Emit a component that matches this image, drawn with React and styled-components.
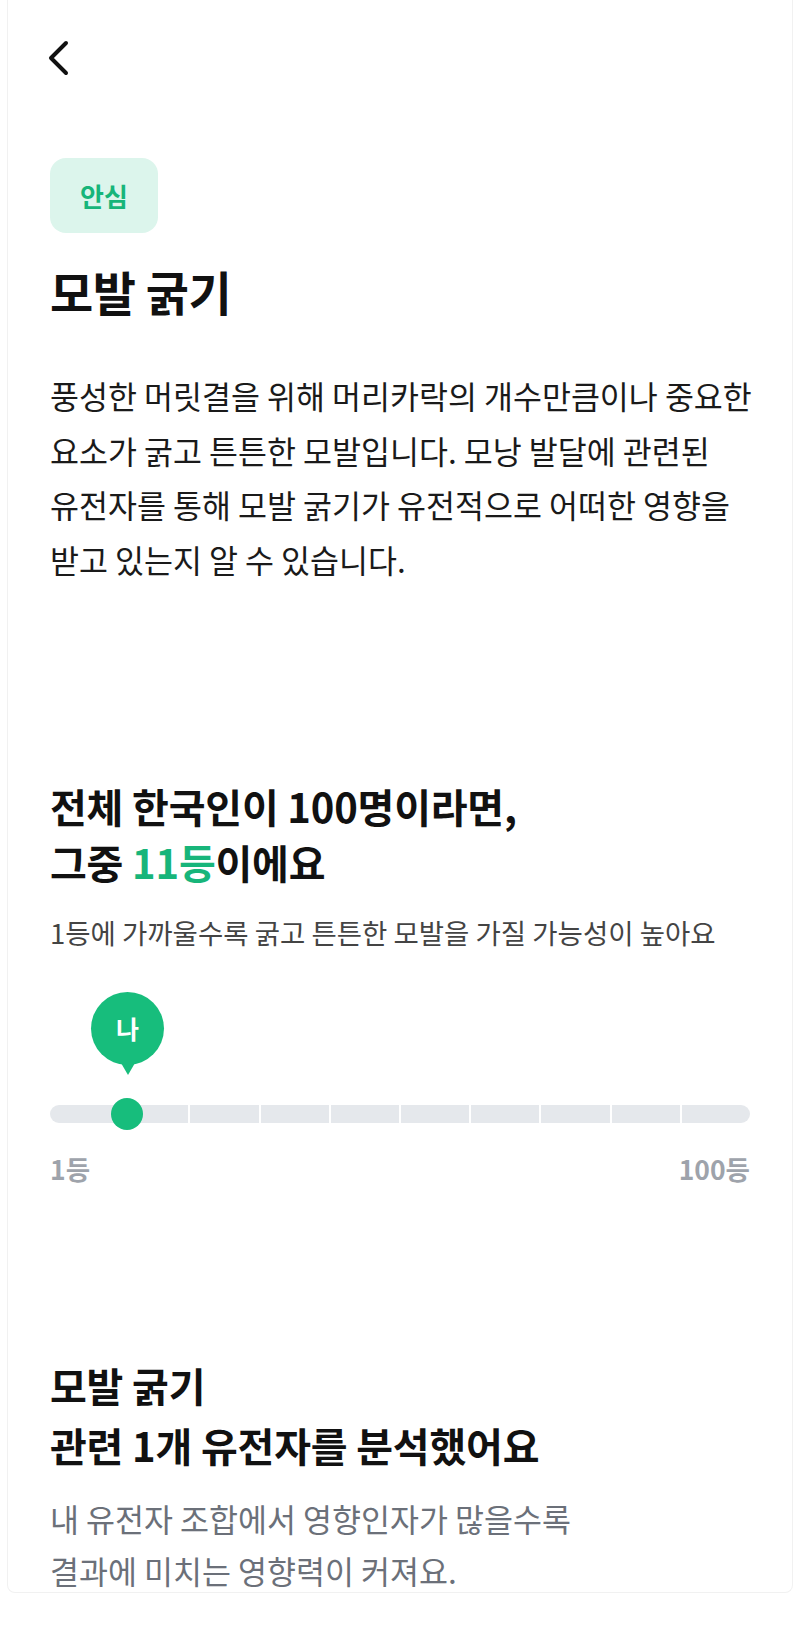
import { createGlobalStyle, styled } from "styled-components";

const GlobalStyle = createGlobalStyle`
  * { box-sizing: border-box; }
  body {
    margin: 0;
    background: #ffffff;
    font-family: "Noto Sans CJK KR", "Noto Sans", sans-serif;
    color: #111111;
  }
`;

const Card = styled.div`
  margin: 0 7px;
  height: 1593px;
  padding: 0 42px;
  border: 1px solid #f1f1f1;
  border-top: none;
  border-radius: 0 0 8px 8px;
`;

const Header = styled.div`
  padding-top: 40px;
  height: 76px;
`;

const BackButton = styled.button`
  border: none;
  background: none;
  padding: 0;
  margin-left: -5px;
  cursor: pointer;
  display: block;
`;

const Badge = styled.div`
  margin-top: 82px;
  width: 108px;
  height: 75px;
  border-radius: 16px;
  background: #dcf5ec;
  color: #17b57a;
  font-size: 26px;
  font-weight: 700;
  display: flex;
  align-items: center;
  justify-content: center;
`;

const Title = styled.h1`
  margin: 28px 0 0;
  font-size: 47px;
  line-height: 60px;
  font-weight: 700;
  letter-spacing: -0.5px;
`;

const Paragraph = styled.p`
  margin: ${(p) => p.$top}px 0 0;
  font-size: 31.5px;
  line-height: ${(p) => p.$lh}px;
  color: ${(p) => p.$color};
  white-space: nowrap;
`;

const Heading = styled.h2`
  margin: ${(p) => p.$top}px 0 0;
  font-size: 40px;
  line-height: ${(p) => p.$lh}px;
  font-weight: 700;
  letter-spacing: -0.2px;
  white-space: nowrap;
`;

const Highlight = styled.span`
  color: #17b57a;
`;

const SubText = styled.p`
  margin: 24px 0 0;
  font-size: 27.5px;
  line-height: 36px;
  color: #444444;
  white-space: nowrap;
`;

const Slider = styled.div`
  position: relative;
  margin-top: 44px;
  padding-top: 111px;
`;

const Track = styled.div`
  display: flex;
  gap: 2px;
  height: 18px;
`;

const Segment = styled.div`
  flex: 1;
  background: #e5e8ec;
  &:first-child { border-radius: 9px 0 0 9px; }
  &:last-child { border-radius: 0 9px 9px 0; }
`;

const Marker = styled.div`
  position: absolute;
  top: 0;
  bottom: 0;
  width: 0;
`;

const Bubble = styled.div`
  position: absolute;
  top: -2px;
  left: -36px;
  width: 73px;
  height: 73px;
  border-radius: 50%;
  background: #17bd7c;
  color: #ffffff;
  font-size: 25px;
  font-weight: 700;
  display: flex;
  align-items: center;
  justify-content: center;
  &::after {
    content: "";
    position: absolute;
    left: 50%;
    bottom: -10px;
    transform: translateX(-50%);
    border-left: 7px solid transparent;
    border-right: 7px solid transparent;
    border-top: 12px solid #17bd7c;
  }
`;

const Dot = styled.div`
  position: absolute;
  bottom: -7px;
  left: -16px;
  width: 32px;
  height: 32px;
  border-radius: 50%;
  background: #17bd7c;
`;

const Labels = styled.div`
  margin-top: 30px;
  display: flex;
  justify-content: space-between;
  font-size: 26.5px;
  line-height: 32px;
  font-weight: 700;
  color: #9ea3ab;
`;

function ChevronLeft() {
  return (
    <svg width="26" height="36" viewBox="0 0 26 36" fill="none">
      <path
        d="M21 3 L6 18 L21 33"
        stroke="#111111"
        strokeWidth="4"
        strokeLinecap="round"
        strokeLinejoin="round"
      />
    </svg>
  );
}

function RankSlider({ rank, total }) {
  const pos = (rank / total) * 100;
  return (
    <Slider>
      <Track>
        {Array.from({ length: 10 }).map((_, i) => (
          <Segment key={i} />
        ))}
      </Track>
      <Marker style={{ left: `${pos}%` }}>
        <Bubble>나</Bubble>
        <Dot />
      </Marker>
    </Slider>
  );
}

export default function App() {
  return (
    <>
      <GlobalStyle />
      <Card>
        <Header>
          <BackButton aria-label="뒤로">
            <ChevronLeft />
          </BackButton>
        </Header>

        <Badge>안심</Badge>
        <Title>모발 굵기</Title>

        <Paragraph $top={47} $lh={54.7} $color="#1a1a1a">
          풍성한 머릿결을 위해 머리카락의 개수만큼이나 중요한
          <br />
          요소가 굵고 튼튼한 모발입니다. 모낭 발달에 관련된
          <br />
          유전자를 통해 모발 굵기가 유전적으로 어떠한 영향을
          <br />
          받고 있는지 알 수 있습니다.
        </Paragraph>

        <Heading $top={191} $lh={56}>
          전체 한국인이 100명이라면,
          <br />
          그중 <Highlight>11등</Highlight>이에요
        </Heading>
        <SubText>1등에 가까울수록 굵고 튼튼한 모발을 가질 가능성이 높아요</SubText>

        <RankSlider rank={11} total={100} />

        <Labels>
          <span>1등</span>
          <span>100등</span>
        </Labels>

        <Heading $top={170} $lh={60}>
          모발 굵기
          <br />
          관련 1개 유전자를 분석했어요
        </Heading>
        <Paragraph $top={17} $lh={52} $color="#6b7079">
          내 유전자 조합에서 영향인자가 많을수록
          <br />
          결과에 미치는 영향력이 커져요.
        </Paragraph>
      </Card>
    </>
  );
}
